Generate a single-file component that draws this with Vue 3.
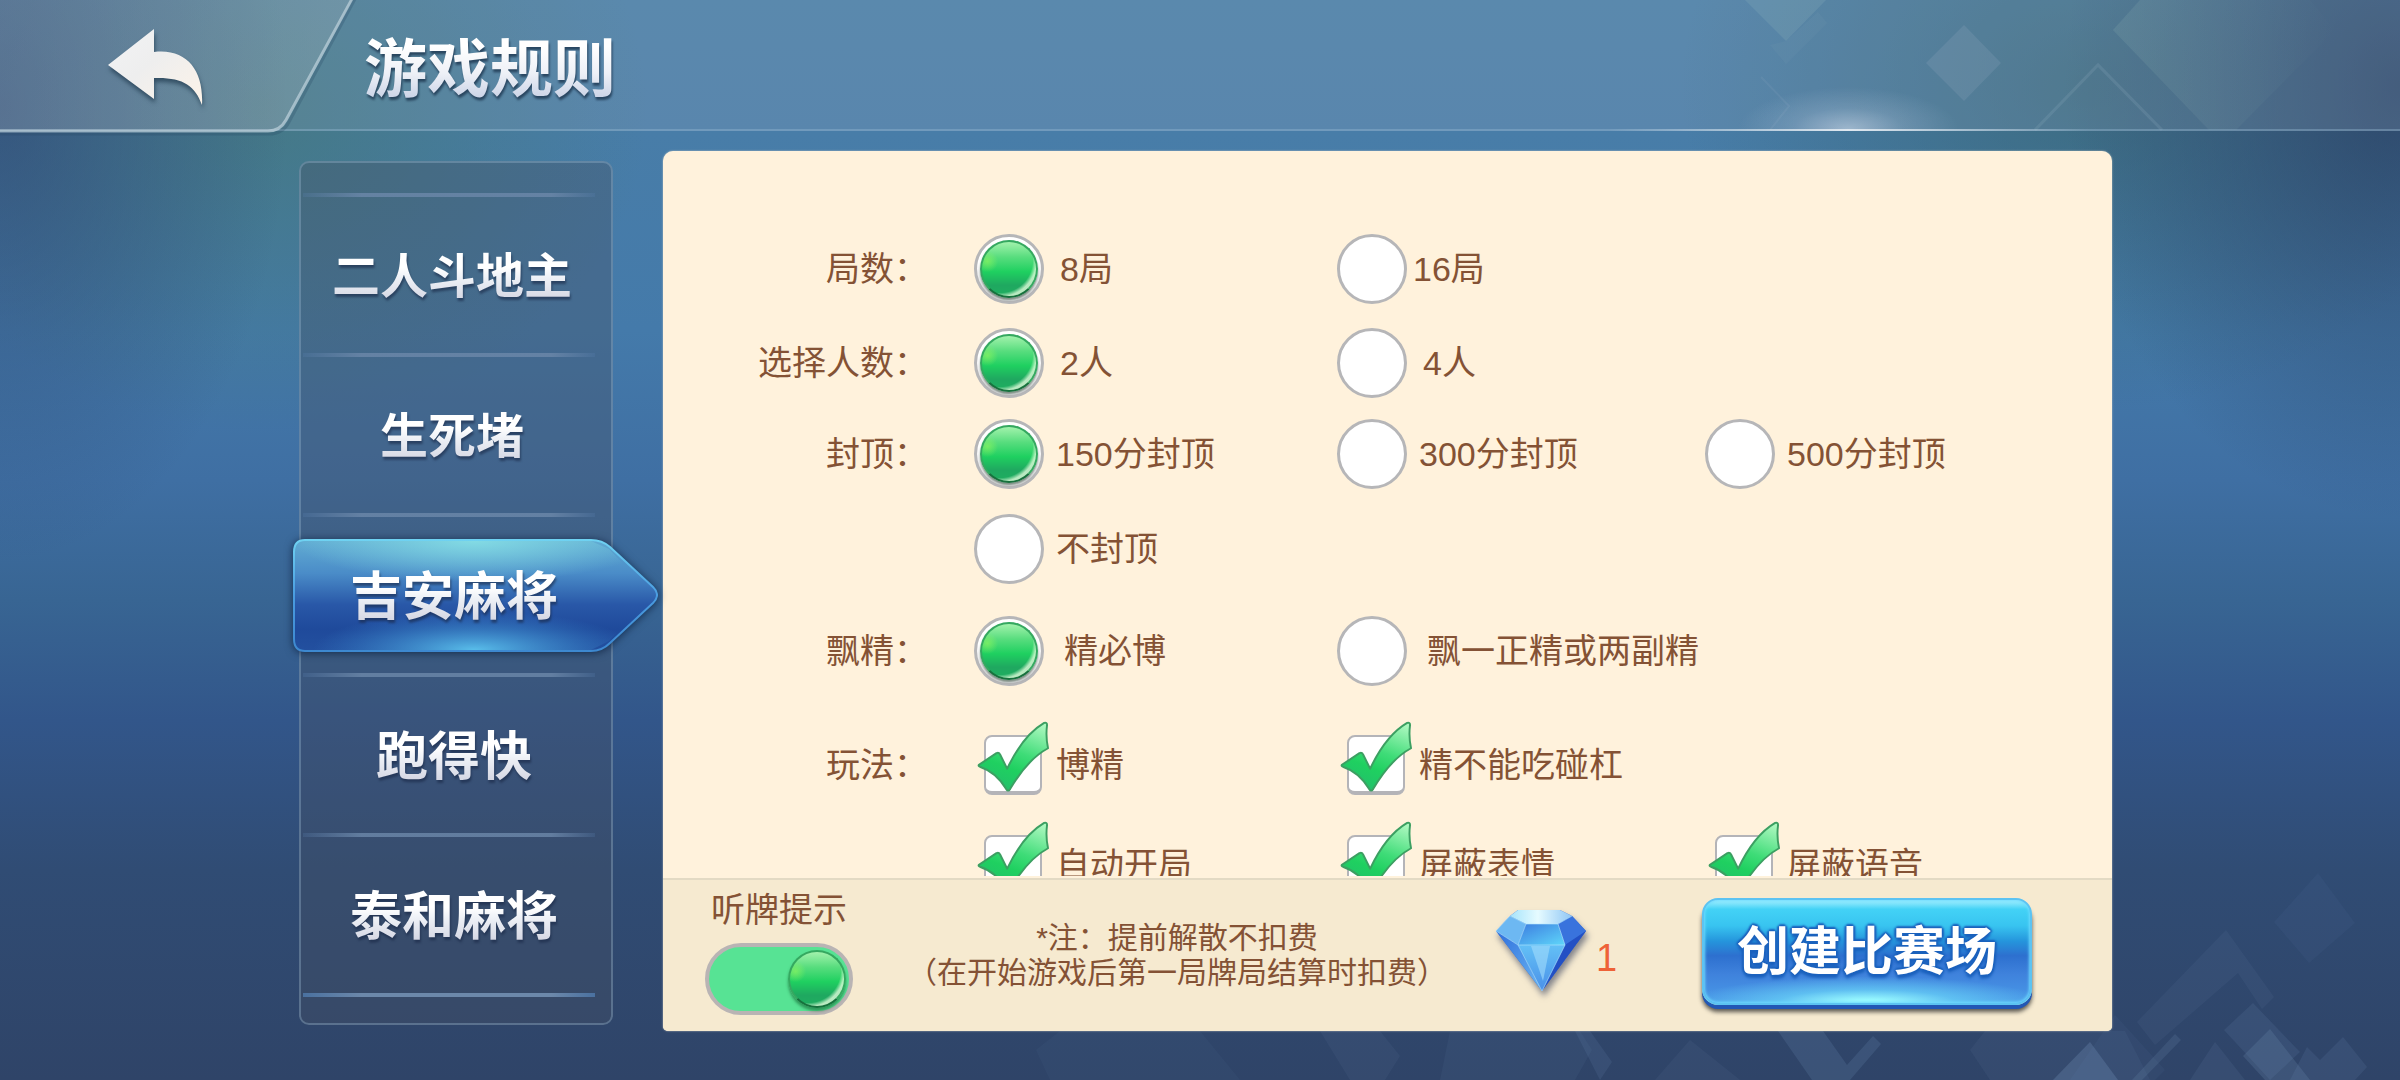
<script setup>
import { reactive, ref } from 'vue'

const games = ['二人斗地主', '生死堵', '吉安麻将', '跑得快', '泰和麻将']
const activeGame = ref('吉安麻将')

const groups = [
  { key: 'rounds', label: '局数：', type: 'radio', options: ['8局', '16局'] },
  { key: 'players', label: '选择人数：', type: 'radio', options: ['2人', '4人'] },
  { key: 'cap', label: '封顶：', type: 'radio', options: ['150分封顶', '300分封顶', '500分封顶', '不封顶'] },
  { key: 'float', label: '飘精：', type: 'radio', options: ['精必博', '飘一正精或两副精'] },
  { key: 'play', label: '玩法：', type: 'checkbox', options: ['博精', '精不能吃碰杠', '', '自动开局', '屏蔽表情', '屏蔽语音'] }
]

const chosen = reactive({
  rounds: '8局',
  players: '2人',
  cap: '150分封顶',
  float: '精必博',
  play: ['博精', '精不能吃碰杠', '自动开局', '屏蔽表情', '屏蔽语音']
})
const hint = ref(true)
</script>

<template>
  <div class="page">
    <svg class="scenery" viewBox="0 0 2400 1080" preserveAspectRatio="xMaxYMid slice" aria-hidden="true">
      <defs>
        <linearGradient id="fade" x1="0" y1="0" x2="1" y2="0">
          <stop offset="0" stop-color="#9cc4b8" stop-opacity=".16" />
          <stop offset="1" stop-color="#9cc4b8" stop-opacity="0" />
        </linearGradient>
      </defs>
      <path d="M2140 0 2113 30 2209 130H2236L2335 30 2310 0Z" fill="url(#fade)" />
      <path d="M1745 0H1826L1786 41Z" fill="#a5cdc4" opacity=".16" />
      <path d="M1818 12 1827 23 1786 64 1770 45 1786 41Z" fill="#a5cdc4" opacity=".06" />
      <path d="M1964 25 2001 63 1964 101 1926 63Z" fill="#b4c4da" opacity=".15" />
      <path d="M2035 130 2098 65 2162 130" fill="none" stroke="#b0c9d4" stroke-width="3" opacity=".15" />
      <path d="M1761 77 1789 106 1770 130" fill="none" stroke="#b0c9d4" stroke-width="2" opacity=".1" />
      <g fill="#7f9fc4">
        <path d="M2318 873 2355 923 2309 963 2274 922Z" opacity=".06" />
        <path d="M2226 930 2274 997 2262 1009 2238 973 2155 1045 2137 1022Z" opacity=".08" />
        <path d="M2253 1003 2300 1052 2270 1080 2224 1030Z" opacity=".12" />
        <path d="M2270 1029 2310 1080H2265L2243 1056Z" opacity=".18" />
        <path d="M2090 1042 2118 1080H2053Z" opacity=".25" />
        <path d="M1778 1031H1823L1847 1065 1873 1036 1881 1044 1850 1080H1812Z" opacity=".16" />
        <path d="M1985 1031H2125L2150 1080H1990L1970 1050Z" opacity=".08" />
        <path d="M2115 1015 2165 1070 2155 1080H2070Z" opacity=".06" />
        <path d="M2175 1034 2181 1040 2142 1080H2132Z" opacity=".15" />
        <path d="M2343 1037 2367 1067 2355 1080H2290L2307 1047 2320 1060Z" opacity=".12" />
        <path d="M2215 1042 2245 1080H2190Z" opacity=".1" />
        <path d="M1320 1031H1380L1400 1056 1385 1080H1350Z" opacity=".08" />
        <path d="M1450 1031H1580L1592 1050 1575 1080H1440Z" opacity=".07" />
        <path d="M1575 1031H1590L1612 1062 1600 1080Z" opacity=".12" />
        <path d="M1690 1040 1740 1080H1655Z" opacity=".08" />
        <path d="M1036 1050 1060 1031H1200L1240 1080H1050Z" opacity=".05" />
      </g>
    </svg>

    <header class="header">
      <svg class="back-plate" viewBox="0 0 360 140" aria-hidden="true">
        <defs>
          <linearGradient id="plate" x1="0" y1="0" x2="1" y2="0">
            <stop offset="0" stop-color="#8090a0" stop-opacity=".25" />
            <stop offset="1" stop-color="#b4c0c4" stop-opacity=".25" />
          </linearGradient>
        </defs>
        <path d="M0 0H352L286 120Q280 131 268 131H0Z" fill="url(#plate)" />
        <path d="M352 -1 286 120Q280 131 268 131H0" fill="none" stroke="#b9cdd8" stroke-opacity=".75" stroke-width="3" />
        <path d="M355 -1 289 122Q283 134 269 134H0" fill="none" stroke="#23455f" stroke-opacity=".25" stroke-width="3" />
      </svg>
      <button class="back" type="button" aria-label="返回">
        <svg viewBox="0 0 100 80" width="100" height="80" aria-hidden="true">
          <defs>
            <linearGradient id="arrow" x1="0" y1="0" x2="1" y2="1">
              <stop offset="0" stop-color="#f2f3f5" />
              <stop offset=".45" stop-color="#eeeeee" />
              <stop offset="1" stop-color="#fdf3e8" />
            </linearGradient>
          </defs>
          <path d="M1 37 47 1V24C80 20 97 43 95 77 88 57 75 49 47 50V71Z" fill="url(#arrow)" />
        </svg>
      </button>
      <h1 class="title">游戏规则</h1>
    </header>

    <main class="body">
      <nav class="tabs">
        <button
          v-for="(g, i) in games"
          :key="g"
          type="button"
          class="tab"
          :class="{ active: g === activeGame, large: i > 1 }"
          @click="activeGame = g"
        >
          <svg v-if="g === activeGame" class="tab-shape" viewBox="0 0 386 134" aria-hidden="true">
            <defs>
              <linearGradient id="tabFill" x1="0" y1="0" x2="0" y2="1">
                <stop offset="0" stop-color="#62add3" />
                <stop offset=".3" stop-color="#4a8cc8" />
                <stop offset=".58" stop-color="#2958a8" />
                <stop offset=".8" stop-color="#1f4a9b" />
                <stop offset="1" stop-color="#23509f" />
              </linearGradient>
              <radialGradient id="tabTop" cx=".5" cy="0" r=".5" gradientTransform="matrix(1 0 0 .75 0 0)">
                <stop offset="0" stop-color="#8be6e8" stop-opacity=".8" />
                <stop offset="1" stop-color="#8be6e8" stop-opacity="0" />
              </radialGradient>
              <radialGradient id="tabBottom" cx=".5" cy="1" r=".45" gradientTransform="matrix(1 0 0 .8 0 .2)">
                <stop offset="0" stop-color="#5cc4ee" stop-opacity=".95" />
                <stop offset="1" stop-color="#3d8fd6" stop-opacity="0" />
              </radialGradient>
              <linearGradient id="tabEdge" x1="0" y1="0" x2="0" y2="1">
                <stop offset="0" stop-color="#6fd2f2" />
                <stop offset=".5" stop-color="#4a9ce0" />
                <stop offset="1" stop-color="#3d88d0" />
              </linearGradient>
            </defs>
            <g stroke-linejoin="round">
              <path d="M22 11H308Q319 11 327 18L370 58Q378 66 370 74L327 114Q319 122 308 122H22Q11 122 11 110V23Q11 11 22 11Z" fill="url(#tabFill)" stroke="url(#tabEdge)" stroke-width="2" />
              <path d="M22 12H308L326 20 370 66 326 112 308 121H22L12 111V22Z" fill="url(#tabTop)" />
              <path d="M22 12H308L326 20 370 66 326 112 308 121H22L12 111V22Z" fill="url(#tabBottom)" />
            </g>
          </svg>
          <span class="tab-text">{{ g }}</span>
        </button>
      </nav>

      <section class="panel">
        <div class="options">
          <div
            v-for="grp in groups"
            :key="grp.key"
            class="group"
            :class="grp.key"
            role="group"
            :aria-labelledby="'label-' + grp.key"
          >
            <span :id="'label-' + grp.key" class="group-label">{{ grp.label }}</span>
            <div class="choices">
              <template v-for="(o, i) in grp.options" :key="i">
                <label v-if="o" class="choice" :class="{ tight: o === '16局' }">
                  <input v-if="grp.type === 'radio'" v-model="chosen[grp.key]" class="radio" type="radio" :name="grp.key" :value="o" />
                  <span v-else class="check">
                    <input v-model="chosen[grp.key]" class="box" type="checkbox" :value="o" />
                    <svg class="tick" viewBox="0 0 78 74" width="76" height="72" aria-hidden="true">
                      <defs>
                        <linearGradient id="tickFill" x1=".8" y1="0" x2=".4" y2="1">
                          <stop offset="0" stop-color="#a9f7bd" />
                          <stop offset=".45" stop-color="#3fdc78" />
                          <stop offset=".7" stop-color="#1fd060" />
                          <stop offset="1" stop-color="#22c06a" />
                        </linearGradient>
                      </defs>
                      <path d="M4 45 22 33Q25 32 26 35L33 49C42 30 54 12 71 2Q74 1 74 4C73 12 73 19 75 28 60 36 46 53 36 70Q34 73 32 70C25 58 17 51 5 47Q3 46 4 45Z" fill="url(#tickFill)" stroke="#3c9f62" stroke-width="2" stroke-linejoin="round" />
                    </svg>
                  </span>
                  <span>{{ o }}</span>
                </label>
                <span v-else></span>
              </template>
            </div>
          </div>
        </div>

        <footer class="footer">
          <div class="hint">
            <label for="hint">听牌提示</label>
            <input id="hint" v-model="hint" class="switch" type="checkbox" role="switch" />
          </div>
          <p class="note">*注：提前解散不扣费<br />（在开始游戏后第一局牌局结算时扣费）</p>
          <div class="cost">
            <svg class="gem" viewBox="0 0 90 82" width="90" height="82" aria-hidden="true">
              <defs>
                <linearGradient id="gemTop" x1="0" y1="0" x2="1" y2="0">
                  <stop offset="0" stop-color="#a6e4fb" />
                  <stop offset=".45" stop-color="#e6fbff" />
                  <stop offset="1" stop-color="#8fc6f5" />
                </linearGradient>
                <linearGradient id="gemFace" x1="0" y1="0" x2="1" y2="1">
                  <stop offset="0" stop-color="#3c7de0" />
                  <stop offset="1" stop-color="#5fd6fa" />
                </linearGradient>
                <linearGradient id="gemLow" x1="0" y1="0" x2="0" y2="1">
                  <stop offset="0" stop-color="#63c0f6" />
                  <stop offset="1" stop-color="#4a90e8" />
                </linearGradient>
                <linearGradient id="gemLeft" x1="0" y1="0" x2="1" y2="1">
                  <stop offset="0" stop-color="#2f6fdc" />
                  <stop offset="1" stop-color="#6cb8f4" />
                </linearGradient>
              </defs>
              <path d="M22 1H64L76 7 90 22 46 82 0 22 14 7Z" fill="#2e66d2" />
              <path d="M22 1H64L76 7 62 15H30L14 7Z" fill="url(#gemTop)" />
              <path d="M14 7 30 15 22 36 0 22Z" fill="#6db8f2" />
              <path d="M76 7 62 15 69 36 90 22Z" fill="#3973dd" />
              <path d="M30 15H62L69 36H22Z" fill="url(#gemFace)" />
              <path d="M0 22 22 36 46 82Z" fill="url(#gemLeft)" />
              <path d="M90 22 69 36 46 82Z" fill="#2350c4" />
              <path d="M22 36H69L46 82Z" fill="url(#gemLow)" />
              <path d="M35 37H54L47 72Z" fill="#a2dcfb" opacity=".6" />
              <path d="M0 22 14 7 30 15 22 36ZM30 15H62L76 7M62 15 69 36H22L46 82 69 36" fill="none" stroke="#b5e6fd" stroke-opacity=".6" />
            </svg>
            <span>1</span>
          </div>
          <button class="create" type="button">创建比赛场</button>
        </footer>
      </section>
    </main>
  </div>
</template>

<style>
body {
  margin: 0;
}
</style>

<style scoped>
.page {
  position: relative;
  display: flex;
  flex-direction: column;
  height: 100vh;
  overflow: hidden;
  color: #845235;
  font-family: "Liberation Sans", "Noto Sans CJK SC", sans-serif;
  font-size: 34px;
  line-height: 34px;
  background:
    radial-gradient(ellipse 12% 42% at 0 10%, rgba(42, 62, 105, 0.6), transparent),
    radial-gradient(ellipse 16% 30% at 11% 10%, rgba(66, 118, 112, 0.6), transparent),
    radial-gradient(ellipse 14% 40% at 100% 8%, rgba(36, 52, 85, 0.7), transparent),
    radial-gradient(ellipse 17% 30% at 87% 8%, rgba(52, 96, 104, 0.6), transparent),
    linear-gradient(180deg, #4a80a8 0, #487da8 131px, #447aaa 330px, #3f6fa3 480px, #386593 600px, #32568a 720px, #304c74 870px, #2f4468 1080px);
}

.page *,
.page *::before {
  box-sizing: border-box;
}

button {
  padding: 0;
  border: 0;
  background: none;
  font: inherit;
  color: inherit;
  cursor: pointer;
}

.scenery {
  position: absolute;
  inset: 0;
  width: 100%;
  height: 100%;
}

.header {
  position: relative;
  display: flex;
  align-items: center;
  flex: none;
  height: 131px;
  border-bottom: 2px solid rgba(150, 185, 210, 0.4);
  background:
    radial-gradient(ellipse 110px 42px at 77% 100%, rgba(215, 225, 240, 0.55), rgba(200, 215, 235, 0.2) 50%, transparent),
    rgba(150, 170, 190, 0.22);
}

.header::after {
  content: "";
  position: absolute;
  left: 67%;
  width: 20%;
  bottom: -2px;
  height: 2px;
  background: linear-gradient(90deg, transparent, #dfe8f0, transparent);
}

.back-plate {
  position: absolute;
  left: 0;
  top: 0;
  width: 360px;
  height: 140px;
}

.back {
  position: relative;
  width: 258px;
  padding: 6px 0 0 56px;
  height: 100%;
  display: grid;
  place-items: center;
  filter: drop-shadow(1px 4px 2px rgba(20, 45, 65, 0.6));
}

.title {
  position: relative;
  margin: 8px 0 0 106px;
  font-size: 63px;
  line-height: 76px;
  font-weight: 700;
  color: transparent;
  background: linear-gradient(180deg, #fff 20%, #eef1f7 55%, #c9d2e6 90%);
  background-clip: text;
  filter: drop-shadow(1px 3px 1px rgba(25, 50, 75, 0.75));
}

.body {
  position: relative;
  display: flex;
  flex: 1;
  min-height: 0;
  gap: 50px;
  padding: 20px 288px 49px 299px;
}

.tabs {
  position: relative;
  z-index: 1;
  display: flex;
  flex-direction: column;
  flex: none;
  width: 314px;
  margin: 10px 0 6px;
  padding: 30px 2px;
  border: 2px solid rgba(150, 180, 205, 0.38);
  border-radius: 10px;
  background: rgba(70, 80, 100, 0.36);
  box-sizing: border-box;
}

.tabs::after {
  content: "";
  flex: none;
  width: 292px;
  height: 4px;
  background: linear-gradient(90deg, #4a71a0, #6c88aa 20%, #6c88aa 85%, #4a71a0);
}

.tab {
  position: relative;
  flex: none;
  display: grid;
  place-items: center;
  width: 292px;
  height: 160px;
  padding: 8px 0 0 6px;
  color: #fff;
  font-size: 48px;
  line-height: 64px;
  font-weight: 700;
}

.tab::before {
  content: "";
  position: absolute;
  left: 0;
  top: 0;
  width: 292px;
  height: 4px;
  background: linear-gradient(90deg, rgba(90, 130, 180, 0.25), #6c88aa 20%, #6c88aa 85%, rgba(90, 130, 180, 0.25));
  opacity: 0.8;
}

.tab.large {
  padding-left: 10px;
  font-size: 52px;
}

.tab-text {
  position: relative;
  color: transparent;
  background: linear-gradient(180deg, #fff 35%, #eff2f7 50%, #d6d8e4 85%);
  background-clip: text;
  filter: drop-shadow(1px 3px 1px rgba(25, 40, 70, 0.6));
}

.tab-shape {
  position: absolute;
  left: -20px;
  top: 16px;
  width: 386px;
  height: 134px;
  filter: drop-shadow(0 1px 4px rgba(10, 30, 60, 0.8));
}

.panel {
  display: flex;
  flex-direction: column;
  flex: 1;
  min-width: 0;
  overflow: hidden;
  border-radius: 10px 10px 5px 5px;
  background: #fff2dc;
  box-shadow: 0 0 2px rgba(220, 220, 210, 0.8);
}

.options {
  flex: 1;
  min-height: 0;
  overflow: hidden;
  padding-top: 83px;
  margin-bottom: 2px;
}

.group {
  display: grid;
  grid-template-columns: 311fr 1138fr;
}

.group-label {
  padding-right: 46px;
  line-height: 70px;
  text-align: right;
  white-space: nowrap;
}

.choices {
  display: grid;
  grid-template-columns: 363fr 368fr 407fr;
  row-gap: 25px;
}

.players {
  margin-top: 24px;
}

.cap {
  margin-top: 21px;
}

.float {
  margin-top: 32px;
}

.play {
  margin-top: 44px;
}

.play .choices {
  row-gap: 30px;
}

.choice {
  display: flex;
  align-items: center;
  gap: 16px;
  height: 70px;
  white-space: nowrap;
  cursor: pointer;
}

.cap .choice {
  gap: 12px;
}

.float .choice {
  gap: 20px;
}

.play .choice {
  gap: 12px;
}

.choice.tight {
  gap: 6px;
}

.radio,
.box,
.switch {
  appearance: none;
  flex: none;
  margin: 0;
  position: relative;
  cursor: pointer;
}

.radio {
  width: 70px;
  height: 70px;
  border: 3px solid #b6b6b8;
  border-radius: 50%;
  background: #fff;
}

.radio:checked {
  background: linear-gradient(180deg, #fff 40%, #d8d8da 90%);
}

.radio:checked::before,
.switch::before {
  content: "";
  position: absolute;
  width: 58px;
  height: 58px;
  border: 2px solid #35a860;
  border-bottom-color: #17713d;
  border-radius: 50%;
  background:
    radial-gradient(circle at 34% 34%, transparent 64%, rgba(235, 255, 225, 0.75) 72%),
    radial-gradient(circle at 10% 36%, rgba(150, 250, 90, 0.6) 0, transparent 18%),
    linear-gradient(180deg, #a2f2ac 0, #58dd7e 28%, #1fd060 55%, #1fa860 80%, #1fae60 100%);
}

.radio:checked::before {
  left: 3px;
  top: 3px;
  box-shadow: 0 2px 2px rgba(60, 90, 70, 0.6);
}

.check {
  position: relative;
  width: 70px;
  height: 70px;
  padding: 5px 0 0 10px;
}

.box {
  display: block;
  width: 58px;
  height: 60px;
  border: 2px solid #b4b4b8;
  border-bottom-width: 4px;
  border-radius: 8px;
  background: #fff;
}

.tick {
  position: absolute;
  left: 1px;
  top: -9px;
  visibility: hidden;
  pointer-events: none;
}

.box:checked + .tick {
  visibility: visible;
}

.footer {
  display: flex;
  align-items: center;
  flex: none;
  height: 153px;
  padding: 0 80px 4px 42px;
  border-top: 2px solid #e3dac4;
  background: #f6ead0;
}

.hint {
  display: flex;
  flex-direction: column;
  align-items: center;
  gap: 16px;
  width: 148px;
}

.switch {
  width: 148px;
  height: 72px;
  border: 4px solid #b9b4b4;
  border-radius: 36px;
  background: #57e394;
}

.switch::before {
  left: 4px;
  top: 3px;
  box-shadow: 0 3px 3px rgba(20, 100, 50, 0.6);
}

.switch:checked::before {
  left: 79px;
}

.note {
  margin: 2px 0 0 54px;
  font-size: 30px;
  line-height: 35px;
  text-align: center;
  white-space: nowrap;
}

.cost {
  display: flex;
  align-items: center;
  gap: 10px;
  margin-left: 49px;
  color: #ee6238;
  font-size: 38px;
}

.cost span {
  padding-top: 8px;
}

.gem {
  margin-bottom: 8px;
  filter: drop-shadow(2px 5px 3px rgba(50, 60, 90, 0.6));
}

.create {
  width: 330px;
  height: 107px;
  margin: 0 0 4px auto;
  border: 2px solid #5cc3f2;
  border-radius: 16px;
  color: #fff;
  font-size: 52px;
  font-weight: 700;
  line-height: 60px;
  background:
    radial-gradient(ellipse 55% 26% at 50% 100%, #9bfcff 10%, rgba(110, 220, 250, 0.6) 50%, transparent),
    linear-gradient(180deg, #a5f0ff 0, #43d2f6 9%, #38c4f0 25%, #2595dc 40%, #2d70cf 54%, #3f82dc 72%, #4a9ae8 100%);
  box-shadow:
    inset 0 0 3px 1px #6fdcff,
    0 4px 0 #2257b5,
    0 7px 4px rgba(40, 40, 40, 0.75);
  text-shadow:
    0 0 3px #1c62bd,
    2px 0 2px #1c62bd,
    -2px 0 2px #1c62bd,
    0 -2px 2px #1c62bd,
    0 4px 3px #1c62bd;
}
</style>
